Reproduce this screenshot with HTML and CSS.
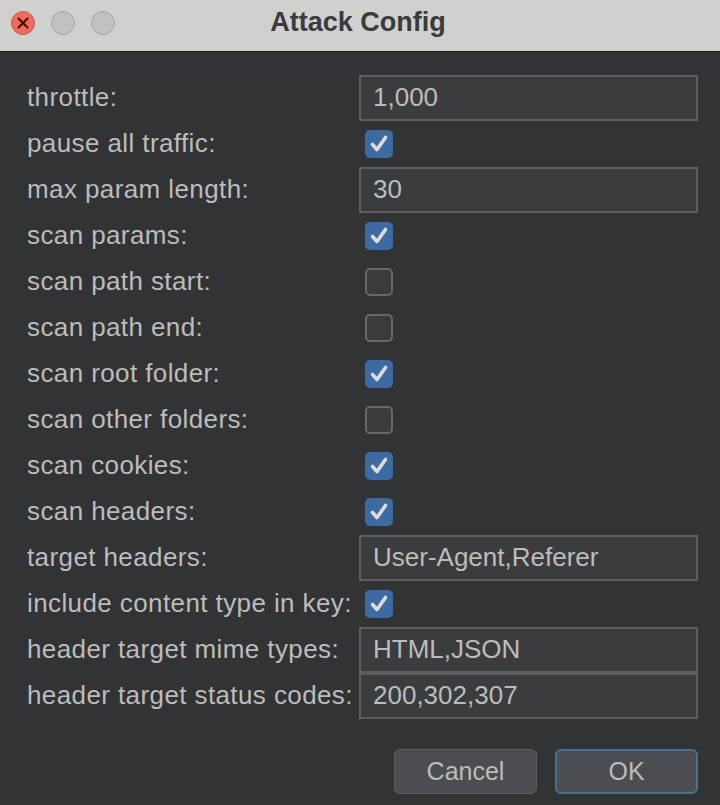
FILE: index.html
```html
<!DOCTYPE html>
<html>
<head>
<meta charset="utf-8">
<link rel="stylesheet" href="styles.css">
</head>
<body>
<div class="window">
  <div class="titlebar">
    <div class="lights">
      <span class="light close"><svg width="24" height="24" viewBox="0 0 24 24"><path d="M7.5 7.5 L16.5 16.5 M16.5 7.5 L7.5 16.5" stroke="#4f0805" stroke-width="2" stroke-linecap="round"/></svg></span>
      <span class="light off"></span>
      <span class="light off"></span>
    </div>
    <div class="title">Attack Config</div>
  </div>
  <div class="content">
    <div class="form">
      <div class="label">throttle:</div><div class="field"><div class="input">1,000</div></div>
      <div class="label">pause all traffic:</div><div class="field"><span class="cb on"><svg viewBox="0 0 28 28"><path d="M7.5 14.5 L12 19.5 L20.5 7.5" fill="none" stroke="#dcdcdc" stroke-width="3.6" stroke-linecap="round" stroke-linejoin="round"/></svg></span></div>
      <div class="label">max param length:</div><div class="field"><div class="input">30</div></div>
      <div class="label">scan params:</div><div class="field"><span class="cb on"><svg viewBox="0 0 28 28"><path d="M7.5 14.5 L12 19.5 L20.5 7.5" fill="none" stroke="#dcdcdc" stroke-width="3.6" stroke-linecap="round" stroke-linejoin="round"/></svg></span></div>
      <div class="label">scan path start:</div><div class="field"><span class="cb"></span></div>
      <div class="label">scan path end:</div><div class="field"><span class="cb"></span></div>
      <div class="label">scan root folder:</div><div class="field"><span class="cb on"><svg viewBox="0 0 28 28"><path d="M7.5 14.5 L12 19.5 L20.5 7.5" fill="none" stroke="#dcdcdc" stroke-width="3.6" stroke-linecap="round" stroke-linejoin="round"/></svg></span></div>
      <div class="label">scan other folders:</div><div class="field"><span class="cb"></span></div>
      <div class="label">scan cookies:</div><div class="field"><span class="cb on"><svg viewBox="0 0 28 28"><path d="M7.5 14.5 L12 19.5 L20.5 7.5" fill="none" stroke="#dcdcdc" stroke-width="3.6" stroke-linecap="round" stroke-linejoin="round"/></svg></span></div>
      <div class="label">scan headers:</div><div class="field"><span class="cb on"><svg viewBox="0 0 28 28"><path d="M7.5 14.5 L12 19.5 L20.5 7.5" fill="none" stroke="#dcdcdc" stroke-width="3.6" stroke-linecap="round" stroke-linejoin="round"/></svg></span></div>
      <div class="label">target headers:</div><div class="field"><div class="input">User-Agent,Referer</div></div>
      <div class="label">include content type in key:</div><div class="field"><span class="cb on"><svg viewBox="0 0 28 28"><path d="M7.5 14.5 L12 19.5 L20.5 7.5" fill="none" stroke="#dcdcdc" stroke-width="3.6" stroke-linecap="round" stroke-linejoin="round"/></svg></span></div>
      <div class="label">header target mime types:</div><div class="field"><div class="input">HTML,JSON</div></div>
      <div class="label">header target status codes:</div><div class="field"><div class="input">200,302,307</div></div>
    </div>
    <div class="buttons">
      <button class="btn">Cancel</button>
      <button class="btn default">OK</button>
    </div>
  </div>
</div>
</body>
</html>
```
FILE: styles.css
```css
html, body {
  margin: 0;
  padding: 0;
  width: 720px;
  height: 805px;
  overflow: hidden;
  background: #323335;
}
.window {
  width: 720px;
  height: 805px;
  display: flex;
  flex-direction: column;
  font-family: "Liberation Sans", Arial, sans-serif;
}
.titlebar {
  height: 51px;
  background: #d0d0ce;
  border-bottom: 1px solid #1a1a1a;
  display: flex;
  align-items: center;
  position: relative;
  flex-shrink: 0;
}
.lights {
  display: flex;
  gap: 16px;
  padding-left: 11px;
  margin-top: -6px;
}
.light {
  width: 24px;
  height: 24px;
  border-radius: 50%;
  box-sizing: border-box;
  display: flex;
  align-items: center;
  justify-content: center;
}
.light svg { width: 24px; height: 24px; margin: -1px; }
.close { background: #ed6b5f; border: 1px solid #d0554b; }
.off { background: #c1c1c0; border: 1px solid #a6a6a5; }
.title {
  position: absolute;
  left: 0;
  right: 0;
  top: 0;
  bottom: 6px;
  display: flex;
  align-items: center;
  justify-content: center;
  font-weight: bold;
  font-size: 27px;
  color: #3b3b3b;
  padding-right: 4px;
}
.content {
  flex: 1;
  background: #323335;
  padding: 23px 22px 0 27px;
  display: flex;
  flex-direction: column;
}
.form {
  display: grid;
  grid-template-columns: 332px 339px;
  grid-auto-rows: 46px;
}
.label {
  display: flex;
  align-items: center;
  color: #bcbcbc;
  font-size: 26px;
  letter-spacing: 0.4px;
  white-space: nowrap;
  padding-bottom: 1px;
}
.field {
  display: flex;
  align-items: center;
}
.input {
  box-sizing: border-box;
  width: 339px;
  height: 46px;
  background: #3b3c3e;
  border: 2px solid #5d5e60;
  color: #bcbcbc;
  font-size: 26px;
  padding-left: 12px;
  padding-bottom: 1px;
  display: flex;
  align-items: center;
}
.cb {
  box-sizing: border-box;
  width: 28px;
  height: 28px;
  margin-left: 6px;
  border-radius: 5px;
  border: 2px solid #66676a;
  background: #3a3b3d;
  display: flex;
}
.cb.on {
  background: #3c6aa1;
  border: none;
}
.cb svg { width: 28px; height: 28px; }
.buttons {
  display: flex;
  justify-content: flex-end;
  gap: 18px;
  margin-top: 30px;
}
.btn {
  box-sizing: border-box;
  width: 143px;
  height: 45px;
  border-radius: 6px;
  background: #4b4d50;
  border: 1px solid #5c5e61;
  color: #bcbcbc;
  font-family: "Liberation Sans", Arial, sans-serif;
  font-size: 25px;
  padding: 0 0 1px 0;
}
.btn.default {
  border: 2px solid #4a6f95;
}
```
